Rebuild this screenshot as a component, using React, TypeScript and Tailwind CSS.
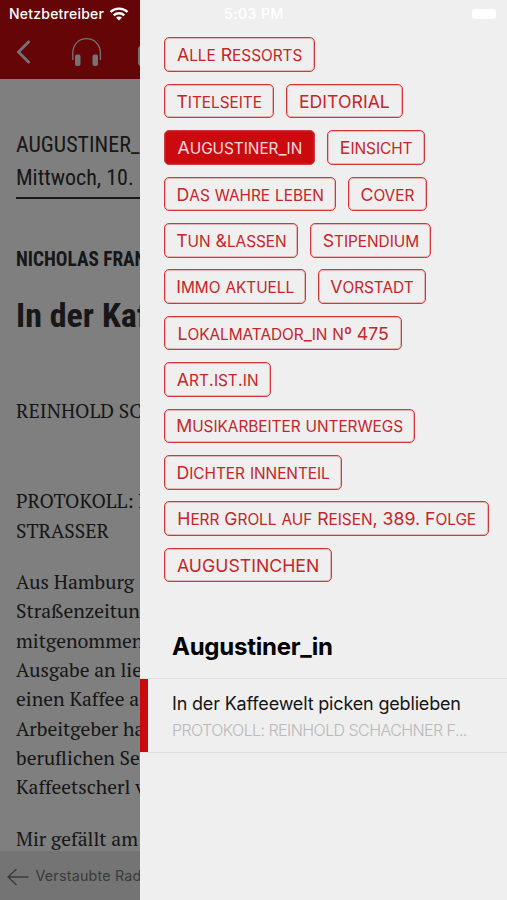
import React from 'react';

type Section = { name: string; box: string; active?: boolean };

const rows: Section[][] = [
  [{ name: 'Alle Ressorts', box: 'w-[150.5px]' }],
  [
    { name: 'Titelseite', box: 'w-[109.5px]' },
    { name: 'EDITORIAL', box: 'w-[117px]' },
  ],
  [
    { name: 'Augustiner_in', box: 'w-[151px]', active: true },
    { name: 'Einsicht', box: 'w-[97.5px]' },
  ],
  [
    { name: 'Das wahre leben', box: 'w-[171.5px]' },
    { name: 'Cover', box: 'w-[79px]' },
  ],
  [
    { name: 'Tun &lassen', box: 'w-[134px]' },
    { name: 'Stipendium', box: 'w-[121px]' },
  ],
  [
    { name: 'Immo aktuell', box: 'w-[141.5px]' },
    { name: 'Vorstadt', box: 'w-[108px]' },
  ],
  [{ name: 'Lokalmatador_in nº 475', box: 'w-[237.5px]' }],
  [{ name: 'Art.ist.in', box: 'w-[106.5px]' }],
  [{ name: 'Musikarbeiter unterwegs', box: 'w-[250.5px]' }],
  [{ name: 'Dichter innenteil', box: 'w-[177.5px]' }],
  [{ name: 'Herr Groll auf Reisen, 389. Folge', box: 'w-[324.5px]' }],
  [{ name: 'AUGUSTINCHEN', box: 'w-[167.5px]' }],
];

const paragraph = [
  'Aus Hamburg',
  'Straßenzeitun',
  'mitgenommen',
  'Ausgabe an lie',
  'einen Kaffee a',
  'Arbeitgeber ha',
  'beruflichen Se',
  'Kaffeetscherl v',
];

// lowercase runs are set as slightly smaller capitals
function SmallCaps({ text }: { text: string }) {
  return (
    <span className="whitespace-pre">
      {text.split(/([a-z]+)/).map((part, i) =>
        i % 2 ? (
          <span key={i} className="text-[15.4px] font-[440] tracking-[-0.04px] uppercase">
            {part}
          </span>
        ) : (
          part
        )
      )}
    </span>
  );
}

function SectionButton({ name, box, active }: Section) {
  return (
    <button
      className={`${box} flex h-[34.6px] shrink-0 items-center justify-center rounded-[5px] border border-[#d0393c] pt-px text-[17.7px] leading-none shadow-[inset_0_0_0_1px_#d0393c50] ${
        active ? 'bg-[#cb0a10] text-[#f6dcdc]' : 'text-[#c4262a]'
      }`}
    >
      <SmallCaps text={name} />
    </button>
  );
}

function Toolbar() {
  return (
    <header className="flex h-[79px] shrink-0 bg-[#cc0a0f] pt-[36px] pl-[15px] text-[#e6e6e6]">
      <svg className="shrink-0" width="20" height="32" viewBox="0 0 20 32" fill="none" stroke="currentColor" strokeWidth="2.8">
        <path d="M14.500 5 3.500 16l11 11" />
      </svg>
      <svg className="ml-[35px] shrink-0" width="34" height="34" viewBox="0 0 34 34" fill="none" stroke="currentColor">
        <path d="M2.800 24V17C2.800 8.500 9 2.700 16.500 2.700S30.400 8.500 30.400 17V24" strokeWidth="1.300" />
        <rect x="5" y="18.500" width="5.500" height="11.500" rx="2" fill="currentColor" stroke="none" />
        <rect x="22.500" y="18.500" width="5.500" height="11.500" rx="2" fill="currentColor" stroke="none" />
      </svg>
      <span className="mt-[10px] ml-[34px] h-[20px] w-[12px] shrink-0 rounded-[3px] bg-current" />
    </header>
  );
}

function Article() {
  return (
    <main className="flex h-[900px] w-[140px] shrink-0 flex-col overflow-hidden bg-white whitespace-nowrap text-[#2e2e2e]">
      <Toolbar />
      <div className="flex h-[772px] shrink-0 flex-col overflow-hidden pl-4">
        <div className="mt-[49px] border-b-2 border-[#333] pb-[3px] font-['Roboto_Condensed',Roboto,sans-serif] text-[22px] leading-[33px] font-stretch-condensed">
          <p>AUGUSTINER_</p>
          <p>Mittwoch, 10. </p>
        </div>
        <h2 className="mt-[48px] font-['Roboto_Condensed',Roboto,sans-serif] text-[19.3px] leading-[26px] font-bold font-stretch-condensed">
          NICHOLAS FRAN
        </h2>
        <h1 className="mt-[20px] font-['Roboto_Condensed',Roboto,sans-serif] text-[34px] leading-[44px] font-bold font-stretch-condensed">
          In der Kaf
        </h1>
        <div className="mt-[60px] font-['PT_Serif','Liberation_Serif',serif] text-[19.5px] leading-[29.350px]">
          <p>REINHOLD SC</p>
          <p className="mt-[61px]">
            PROTOKOLL: R
            <br />
            STRASSER
          </p>
          <p className="mt-[22px]">
            {paragraph.map((line) => (
              <span key={line} className="block">
                {line}
              </span>
            ))}
          </p>
          <p className="mt-[22px]">Mir gefällt am</p>
        </div>
      </div>
      <footer className="flex h-[49px] shrink-0 items-center bg-[#e8e8e8] pt-px pl-[7px] text-[14.3px] tracking-[0.200px] text-[#777]">
        <svg className="mr-[6.500px] shrink-0" width="22" height="20" viewBox="0 0 22 20" fill="none" stroke="currentColor" strokeWidth="1.500">
          <path d="M21.500 11H1.500M9.500 3l-8.500 8 8.500 8" />
        </svg>
        Verstaubte Rad
      </footer>
    </main>
  );
}

function Drawer() {
  return (
    <aside className="flex w-[367px] shrink-0 flex-col bg-[#efefef] pt-[37.400px]">
      <nav className="flex flex-col gap-[11.800px] pl-[24.400px]">
        {rows.map((row) => (
          <div key={row[0].name} className="flex gap-[12px]">
            {row.map((section) => (
              <SectionButton key={section.name} {...section} />
            ))}
          </div>
        ))}
      </nav>
      <h3 className="mt-[48px] pl-8 text-[24px] leading-[34px] font-bold tracking-[-0.250px] text-black">Augustiner_in</h3>
      <div className="mt-[14px] flex h-[75px] border-y border-[#dedede]">
        <div className="w-[8px] bg-[#cb0a10]" />
        <div className="pt-[13px] pl-6 whitespace-nowrap">
          <p className="text-[18px] leading-6 tracking-[-0.170px] text-[#151515]">In der Kaffeewelt picken geblieben</p>
          <p className="mt-[2px] text-[16px] leading-6 font-light tracking-[-0.560px] text-[#b9b9b9]">
            PROTOKOLL: REINHOLD SCHACHNER F...
          </p>
        </div>
      </div>
    </aside>
  );
}

function StatusBar() {
  return (
    <div className="absolute inset-x-0 top-0 flex h-[27px] items-center pl-[9px] text-[14px] font-medium text-white">
      <span className="w-[100px] tracking-[0.220px]">Netzbetreiber</span>
      <svg width="20" height="14" viewBox="0 0 20 14" fill="none" stroke="currentColor" strokeWidth="2.400">
        <path d="M1.500 5C6.200.500 13.800.500 18.500 5M4.700 8.400c3-2.800 7.600-2.800 10.600 0" />
        <path d="m10 13.600-3-3c1.600-1.500 4.400-1.500 6 0z" fill="currentColor" stroke="none" />
      </svg>
      <span className="ml-[95px] tracking-[0.500px]">5:03 PM</span>
      <span className="mr-[11px] ml-auto h-[10px] w-[24px] rounded-[3px] bg-white" />
    </div>
  );
}

export default function App() {
  return (
    <div className="relative flex h-[900px] w-[507px] overflow-hidden font-[Inter,sans-serif]">
      <Article />
      <div className="absolute inset-y-0 left-0 w-[140px] bg-black/50" />
      <Drawer />
      <StatusBar />
    </div>
  );
}
